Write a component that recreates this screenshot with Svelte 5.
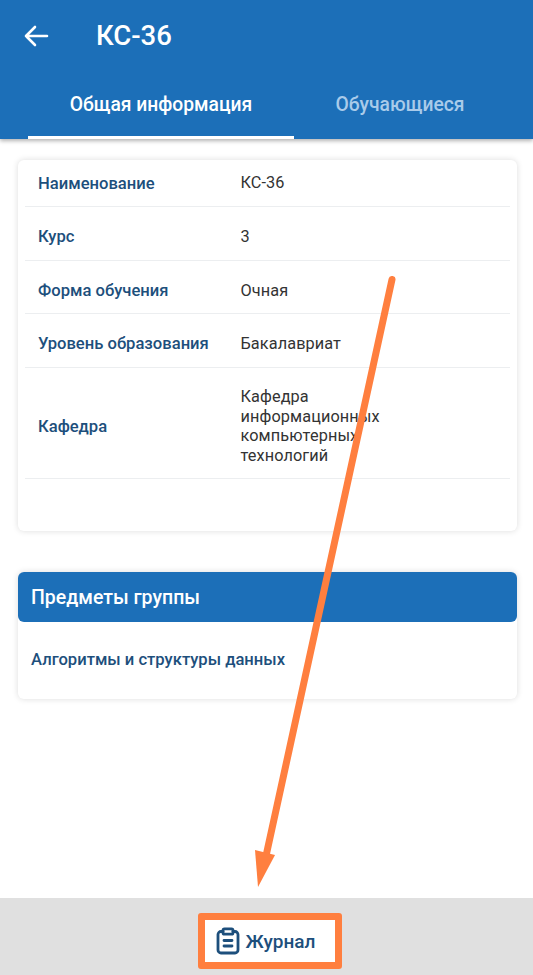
<script>
  const rows = [
    { label: 'Наименование', value: ['КС-36'] },
    { label: 'Курс', value: ['3'] },
    { label: 'Форма обучения', value: ['Очная'] },
    { label: 'Уровень образования', value: ['Бакалавриат'] },
    { label: 'Кафедра', value: ['Кафедра', 'информационных', 'компьютерных', 'технологий'] }
  ];
</script>

<div class="page">
  <header class="header">
    <div class="topbar">
      <svg class="back" width="26" height="26" viewBox="0 0 26 26" fill="none" stroke="#fff" stroke-width="2.6" stroke-linecap="round" stroke-linejoin="round">
        <path d="M24 13H3M12 4l-9 9 9 9" />
      </svg>
      <h1>КС-36</h1>
    </div>
    <nav class="tabs">
      <div class="tab active">Общая информация</div>
      <div class="tab">Обучающиеся</div>
    </nav>
  </header>

  <main class="content">
    <section class="card info">
      {#each rows as row}
        <div class="row">
          <div class="label">{row.label}</div>
          <div class="value">
            {#each row.value as line}
              <div>{line}</div>
            {/each}
          </div>
        </div>
      {/each}
      <div class="spacer"></div>
    </section>

    <section class="card subjects">
      <h2>Предметы группы</h2>
      <div class="subject">Алгоритмы и структуры данных</div>
    </section>
  </main>

  <footer class="footer">
    <div class="journal">
      <svg width="24" height="28" viewBox="0 0 24 28" fill="none" stroke="#1d4f7c" stroke-width="2.8" stroke-linecap="round" stroke-linejoin="round">
        <path d="M7 4.5H5a3 3 0 0 0-3 3V23a3 3 0 0 0 3 3h14a3 3 0 0 0 3-3V7.500a3 3 0 0 0-3-3h-2" />
        <rect x="7" y="1.800" width="10" height="5.400" rx="1.500" />
        <path d="M8 13.500h8M8 19h8" />
      </svg>
      <span>Журнал</span>
    </div>
  </footer>

  <svg class="arrow" width="533" height="975" viewBox="0 0 533 975" fill="none">
    <path d="M392 279.500L266 856" stroke="#ff7f3f" stroke-width="7" stroke-linecap="round" />
    <path d="M255 850L275 855L258 887Z" fill="#ff7f3f" />
  </svg>
</div>

<style>
  :global(body) {
    margin: 0;
    background: #fff;
  }
  .page {
    position: relative;
    width: 533px;
    height: 975px;
    display: flex;
    flex-direction: column;
    overflow: hidden;
    font-family: Roboto, "Noto Sans", sans-serif;
    background: #fff;
  }
  .header {
    height: 139px;
    flex: none;
    background: #1c6fb8;
    box-shadow: 0 2px 4px rgba(0, 0, 0, 0.3);
    display: flex;
    flex-direction: column;
    position: relative;
  }
  .topbar {
    height: 71px;
    padding-left: 23px;
    display: flex;
    align-items: center;
    gap: 47px;
  }
  .back {
    flex: none;
  }
  h1 {
    margin: 0;
    color: #fff;
    font-size: 27.5px;
    font-weight: 500;
  }
  .tabs {
    display: flex;
    padding-left: 28px;
    height: 68px;
  }
  .tab {
    width: 212px;
    padding-top: 22px;
    box-sizing: border-box;
    text-align: center;
    color: #a9cbea;
    font-size: 19.3px;
    font-weight: 500;
  }
  .tab.active {
    width: 266px;
    color: #fff;
    border-bottom: 3px solid #fff;
  }
  .content {
    flex: 1;
    padding: 21px 16px 0 18px;
    display: flex;
    flex-direction: column;
    gap: 41px;
  }
  .card {
    background: #fff;
    border-radius: 6px;
    box-shadow: 0 0 6px rgba(0, 0, 0, 0.14);
  }
  .info {
    height: 371px;
    box-sizing: border-box;
    padding: 0 7px;
    display: flex;
    flex-direction: column;
  }
  .row {
    display: flex;
    align-items: center;
    padding: 9.600px 13px 2.400px;
    box-sizing: border-box;
    border-bottom: 1px solid #eceef0;
    height: 53.500px;
  }
  .row:first-child {
    height: 47px;
    padding: 3px 13px;
  }
  .row:nth-child(5) {
    height: 111px;
  }
  .label {
    width: 203px;
    flex: none;
    color: #1d4f7c;
    font-size: 16.6px;
    font-weight: 500;
  }
  .value {
    color: #333;
    font-size: 16.3px;
    line-height: 19.500px;
    letter-spacing: 0.1px;
    margin-left: -0.5px;
  }
  .spacer {
    flex: 1;
  }
  .subjects {
    height: 127px;
  }
  h2 {
    margin: 0;
    height: 50px;
    line-height: 51px;
    padding-left: 13px;
    background: #1c6fb8;
    border-radius: 6px;
    color: #fff;
    font-size: 19.5px;
    font-weight: 500;
  }
  .subject {
    padding: 28px 13px 0;
    color: #1d4f7c;
    font-size: 16.6px;
    font-weight: 500;
  }
  .footer {
    height: 77px;
    flex: none;
    background: #e0e0e0;
    display: flex;
    justify-content: center;
    box-sizing: border-box;
    padding: 15px 0 0 6px;
  }
  .journal {
    width: 144px;
    height: 56px;
    box-sizing: border-box;
    border: 7px solid #ff7f3f;
    border-radius: 3px;
    background: #fff;
    display: flex;
    align-items: center;
    gap: 6px;
    padding-left: 11px;
    color: #1d4f7c;
    font-size: 19px;
    font-weight: 500;
  }
  .arrow {
    position: absolute;
    inset: 0;
    pointer-events: none;
  }
</style>
